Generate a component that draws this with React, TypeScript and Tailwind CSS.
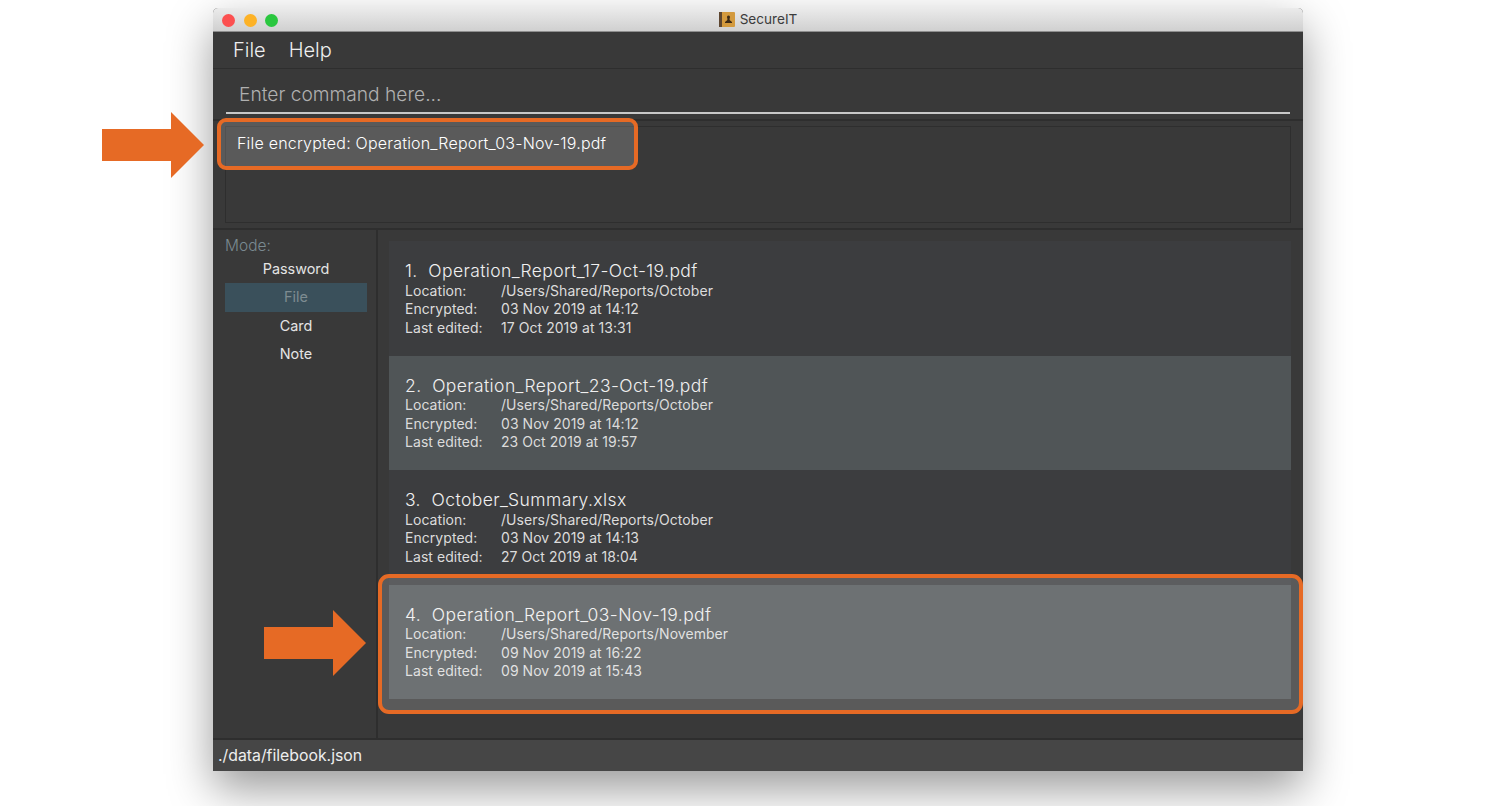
const files = [
  { n: "1.", title: "Operation_Report_17-Oct-19.pdf", loc: "/Users/Shared/Reports/October", enc: "03 Nov 2019 at 14:12", edit: "17 Oct 2019 at 13:31" },
  { n: "2.", title: "Operation_Report_23-Oct-19.pdf", loc: "/Users/Shared/Reports/October", enc: "03 Nov 2019 at 14:12", edit: "23 Oct 2019 at 19:57" },
  { n: "3.", title: "October_Summary.xlsx", loc: "/Users/Shared/Reports/October", enc: "03 Nov 2019 at 14:13", edit: "27 Oct 2019 at 18:04" },
  { n: "4.", title: "Operation_Report_03-Nov-19.pdf", loc: "/Users/Shared/Reports/November", enc: "09 Nov 2019 at 16:22", edit: "09 Nov 2019 at 15:43" },
];

function Arrow({ className }: { className: string }) {
  return (
    <svg className={className} width="102" height="66" viewBox="0 0 102 66">
      <path d="M0 17H69V0L102 33L69 66V49H0Z" fill="#e66a25" />
    </svg>
  );
}

function Detail({ label, value }: { label: string; value: string }) {
  return (
    <div className="flex h-[18.5px] items-center text-[14px] tracking-[0.05px] text-[#dcdcdc]">
      <span className="w-[96px]">{label}</span>
      <span>{value}</span>
    </div>
  );
}

export default function App() {
  return (
    <div className="relative h-[806px] w-[1512px] overflow-hidden bg-white pl-[213px] pt-[8px] font-['Inter',sans-serif]">
      {/* WINDOW */}
      <div className="flex h-[763px] w-[1090px] flex-col rounded-t-[5px] bg-[#393939] shadow-[0_18px_45px_rgba(0,0,0,0.4)]">
        <div className="relative flex h-[24px] shrink-0 items-center justify-center rounded-t-[5px] border-b border-[#8e8e8e] bg-gradient-to-b from-[#ebebeb] to-[#d0d0d0]">
          <div className="absolute left-[9px] top-[5.500px] flex gap-[8.500px]">
            <span className="h-[13px] w-[13px] rounded-full bg-[#fc5050]" />
            <span className="h-[13px] w-[13px] rounded-full bg-[#fdb226]" />
            <span className="h-[13px] w-[13px] rounded-full bg-[#2ac73f]" />
          </div>
          <svg width="16" height="15" viewBox="0 0 16 15" className="mr-[5px]">
            <rect width="16" height="15" rx="1" fill="#d39a3e" />
            <rect width="3" height="15" fill="#5d4630" />
            <path d="M9.500 3.500a1.600 1.600 0 0 1 1.200 2.600L10.600 8l2.400 2v1H6v-1l2.400-2-.1-1.900A1.600 1.600 0 0 1 9.500 3.500Z" fill="#3d2b17" />
          </svg>
          <span className="text-[13.600px] text-[#3c3c3c]">SecureIT</span>
        </div>

        <div className="flex h-[37px] shrink-0 items-center gap-[23px] border-b border-[#2e2e2e] pl-[20px] text-[20px] font-light text-[#eeeeee]">
          <span>File</span>
          <span>Help</span>
        </div>

        <div className="h-[52px] shrink-0 border-b-2 border-[#2e2e2e] px-[13px] pt-[11px]">
          <div className="h-[34px] border-b-2 border-[#c8c8c8] pl-[13px] text-[19.200px] font-light leading-[28px] text-[#b0b0b0]">
            Enter command here...
          </div>
        </div>

        <div className="h-[109px] shrink-0 border-b-2 border-[#2e2e2e] px-[12px] pb-[5px] pt-[5px]">
          <div className="h-full border border-[#2e2e2e] pl-[11px] pt-[6px] text-[16px] font-light leading-[20px] tracking-[0.2px] text-white">
            File encrypted: Operation_Report_03-Nov-19.pdf
          </div>
        </div>

        <div className="flex min-h-0 flex-1">
          <div className="w-[165px] shrink-0 border-r-2 border-[#2e2e2e] pl-[12px] pr-[9px] pt-[6px]">
            <div className="h-[18.500px] text-[15.500px] font-light leading-[19px] text-[#7a8a91]">Mode:</div>
            <div className="flex flex-col text-center text-[14.400px] text-[#e4e4e4]">
              <div className="flex h-[28.500px] items-center justify-center">Password</div>
              <div className="flex h-[28.500px] items-center justify-center bg-[#3a505b] text-[#7e8c91]">File</div>
              <div className="flex h-[28.500px] items-center justify-center">Card</div>
              <div className="flex h-[28.500px] items-center justify-center">Note</div>
            </div>
          </div>
          <div className="flex-1 px-[11px] pr-[12px] pt-[11px]">
            {files.map((f, i) => (
              <div
                key={f.n}
                className={`flex h-[114.500px] flex-col justify-center pl-[16px] ${i % 2 === 0 ? "bg-[#3c3d3f]" : "bg-[#505557]"}`}
              >
                <div className="mt-[1px] h-[19.500px] whitespace-pre text-[17.500px] font-light leading-[19px] tracking-[0.4px] text-[#f0f0f0]">
                  {f.n}  {f.title}
                </div>
                <Detail label="Location:" value={f.loc} />
                <Detail label="Encrypted:" value={f.enc} />
                <Detail label="Last edited:" value={f.edit} />
              </div>
            ))}
          </div>
        </div>

        <div className="flex h-[33px] shrink-0 items-center border-t-2 border-[#2e2e2e] bg-[#464646] pl-[5px] text-[15.800px] text-[#eeeeee]">
          ./data/filebook.json
        </div>
      </div>

      {/* annotations */}
      <div className="absolute left-[217px] top-[118px] h-[52px] w-[421px] rounded-[9px] border-[4px] border-[#e66a25] bg-white/[0.17]" />
      <div className="absolute left-[378px] top-[574px] h-[140px] w-[925px] rounded-[11px] border-[4px] border-[#e66a25] bg-white/[0.17]" />
      <Arrow className="absolute left-[102px] top-[112px]" />
      <Arrow className="absolute left-[264px] top-[610px]" />
    </div>
  );
}
